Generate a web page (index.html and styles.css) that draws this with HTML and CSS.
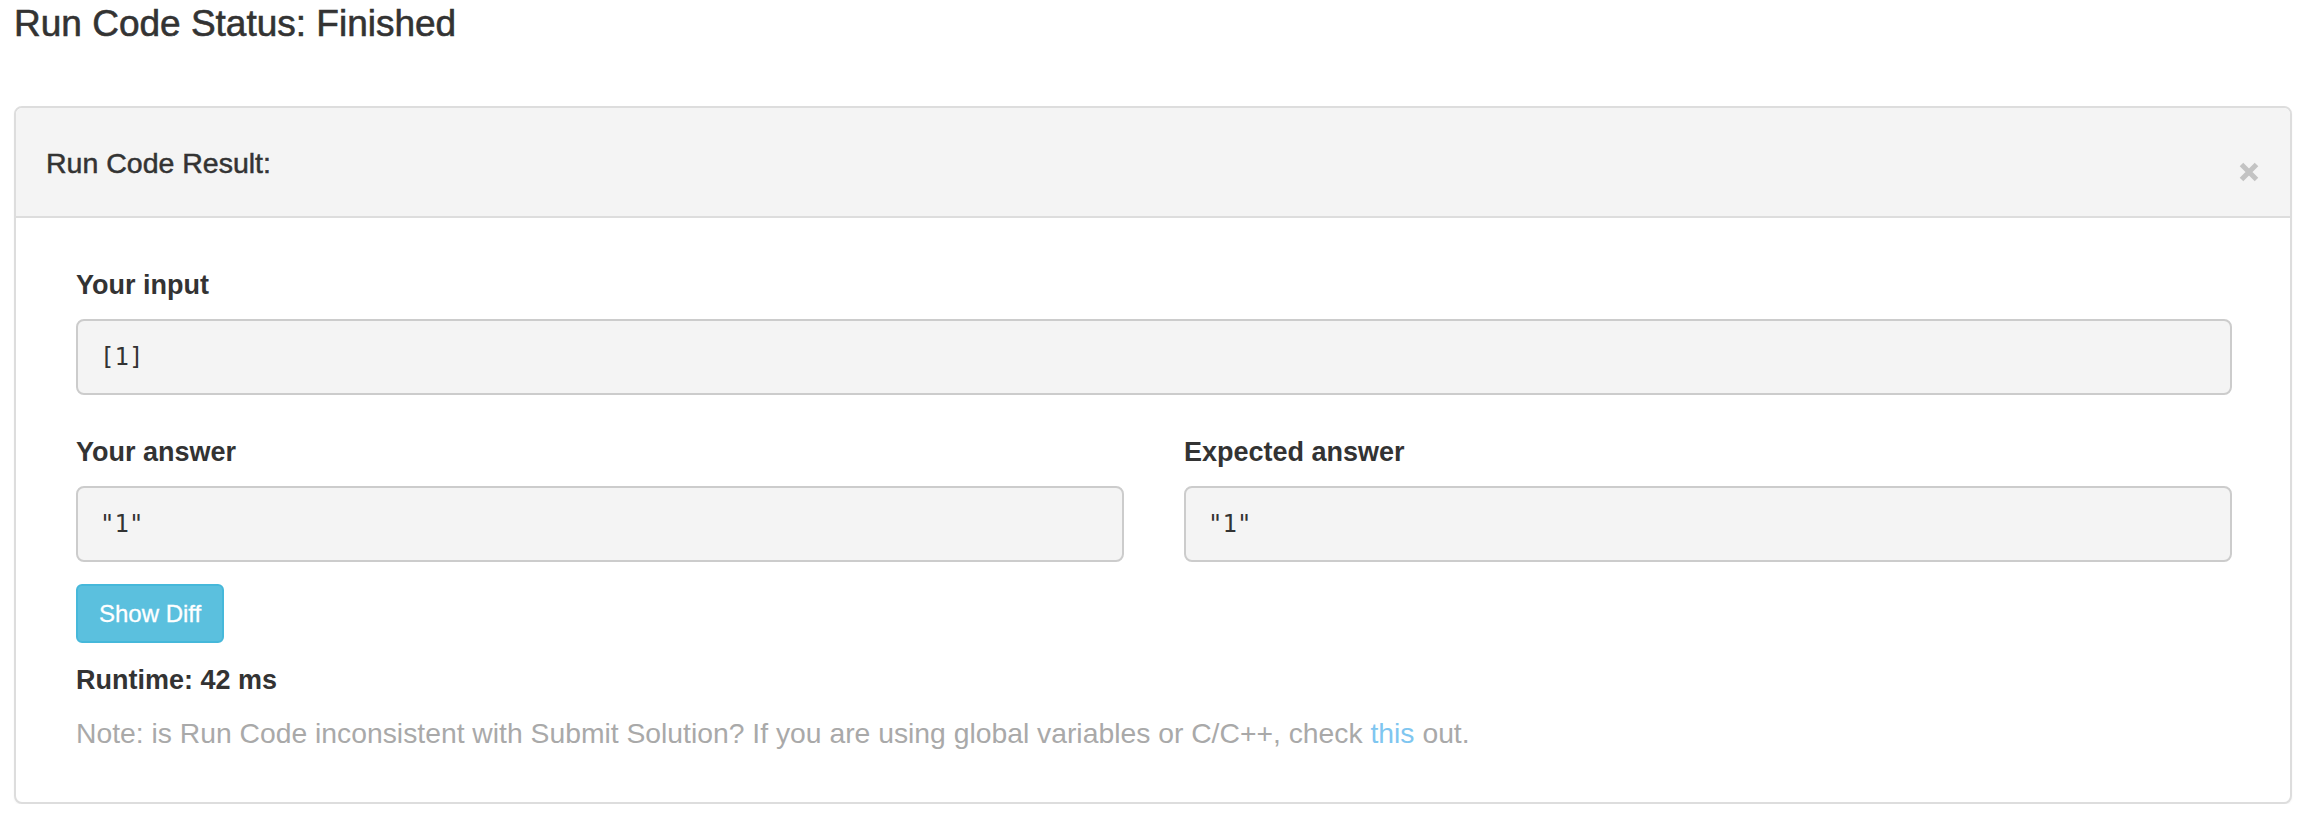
FILE: index.html
```html
<!DOCTYPE html>
<html>
<head>
<meta charset="utf-8">
<link rel="stylesheet" href="styles.css">
</head>
<body>
<div class="page">
  <h1 class="status-title">Run Code Status: Finished</h1>
  <div class="panel">
    <div class="panel-heading">
      <span class="panel-title">Run Code Result:</span>
      <button class="close" aria-label="Close">
        <svg width="20" height="20" viewBox="0 0 20 20"><path d="M2.5 2.5 L17.5 17.5 M17.5 2.5 L2.5 17.5" stroke="#c3c3c3" stroke-width="5" stroke-linecap="butt"/></svg>
      </button>
    </div>
    <div class="panel-body">
      <div class="field">
        <label class="field-label">Your input</label>
        <div class="code-box">[1]</div>
      </div>
      <div class="row">
        <div class="field">
          <label class="field-label">Your answer</label>
          <div class="code-box">"1"</div>
        </div>
        <div class="field">
          <label class="field-label">Expected answer</label>
          <div class="code-box">"1"</div>
        </div>
      </div>
      <button class="btn-info">Show Diff</button>
      <div class="runtime">Runtime: 42 ms</div>
      <div class="note">Note: is Run Code inconsistent with Submit Solution? If you are using global variables or C/C++, check <a href="#" class="note-link">this</a> out.</div>
    </div>
  </div>
</div>
</body>
</html>
```

FILE: styles.css
```css
html, body {
  margin: 0;
  padding: 0;
  background: #ffffff;
}

body {
  font-family: "Liberation Sans", Arial, Helvetica, sans-serif;
  color: #333333;
}

.page {
  padding: 0 12px 0 14px;
}

.status-title {
  margin: 2px 0 0 0;
  font-size: 37px;
  line-height: 44px;
  font-weight: normal;
  color: #333333;
  -webkit-text-stroke: 0.6px #333333;
}

.panel {
  margin-top: 60px;
  border: 2px solid #dddddd;
  border-radius: 8px;
  background: #ffffff;
  box-shadow: 0 1px 2px rgba(0, 0, 0, 0.05);
}

.panel-heading {
  display: flex;
  justify-content: space-between;
  align-items: center;
  padding: 35px 31px 33px 30px;
  background: #f4f4f4;
  border-bottom: 2px solid #dddddd;
  border-radius: 6px 6px 0 0;
}

.panel-title {
  font-size: 28.5px;
  line-height: 40px;
  color: #333333;
  -webkit-text-stroke: 0.5px #333333;
}

.close {
  display: flex;
  padding: 0;
  margin: 18px 0 0 0;
  border: 0;
  background: transparent;
  cursor: pointer;
}

.panel-body {
  padding: 47px 58px 49px 60px;
}

.field-label {
  display: block;
  font-size: 27px;
  line-height: 40px;
  font-weight: bold;
  color: #333333;
}

.code-box {
  margin-top: 14px;
  height: 72px;
  display: flex;
  align-items: center;
  padding: 0 22px;
  background: #f4f4f4;
  border: 2px solid #cccccc;
  border-radius: 8px;
  font-family: "DejaVu Sans Mono", "Liberation Mono", monospace;
  font-size: 24px;
  color: #333333;
}

.row {
  display: grid;
  grid-template-columns: 1fr 1fr;
  column-gap: 60px;
  margin-top: 37px;
}

.btn-info {
  display: block;
  margin-top: 22px;
  height: 59px;
  padding: 0 21px;
  background: #5bc0de;
  border: 2px solid #46b8da;
  border-radius: 6px;
  color: #ffffff;
  font-family: "Liberation Sans", Arial, sans-serif;
  font-size: 24px;
  -webkit-text-stroke: 0.3px #ffffff;
  cursor: pointer;
}

.runtime {
  margin-top: 17px;
  font-size: 27px;
  line-height: 40px;
  font-weight: bold;
  color: #333333;
}

.note {
  margin-top: 13px;
  font-size: 28.3px;
  line-height: 40px;
  color: #a9a9a9;
}

.note-link {
  color: #7fc6f0;
  text-decoration: none;
}
```
